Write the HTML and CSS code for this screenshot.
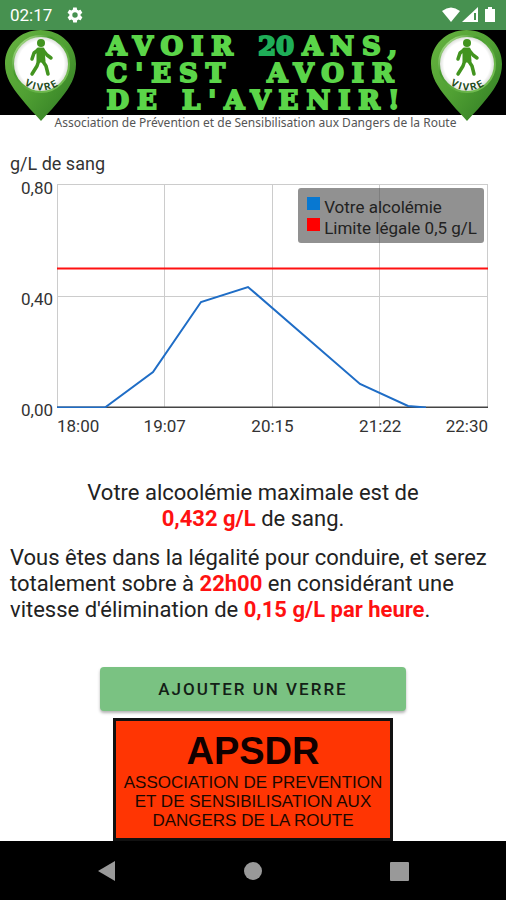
FILE: index.html
```html
<!DOCTYPE html>
<html lang="fr">
<head>
<meta charset="utf-8">
<meta name="viewport" content="width=device-width, initial-scale=1">
<title>Alcoolémie</title>
<link rel="stylesheet" href="styles.css">
</head>
<body>
<div class="status-bar">
  <span>02:17</span>
  <svg class="gear" viewBox="0 0 24 24" width="18" height="18" aria-hidden="true"><path fill="#fff" d="M19.4 13c0-.3.1-.6.1-1s0-.7-.1-1l2.1-1.6c.2-.2.3-.4.1-.7l-2-3.400c-.1-.2-.4-.3-.6-.2l-2.500 1c-.5-.4-1.100-.7-1.700-1l-.4-2.600c0-.3-.2-.5-.5-.5h-4c-.3 0-.5.2-.5.5L9 5.100c-.6.3-1.200.6-1.700 1l-2.500-1c-.2-.1-.5 0-.6.2l-2 3.400c-.1.300 0 .5.100.7L4.500 11c0 .3-.1.600-.1 1s0 .7.100 1l-2.100 1.600c-.2.200-.3.400-.1.700l2 3.400c.1.200.4.300.6.200l2.500-1c.5.4 1.100.7 1.700 1l.4 2.600c0 .3.2.5.5.5h4c.3 0 .5-.2.5-.5l.4-2.600c.6-.3 1.200-.6 1.700-1l2.500 1c.2.1.5 0 .6-.2l2-3.400c.1-.3.1-.5-.1-.7zM12 15.600a3.600 3.600 0 1 1 0-7.200 3.600 3.600 0 0 1 0 7.200z"/></svg>
  <svg class="signals" viewBox="0 0 56 18" width="56" height="18" aria-hidden="true">
    <path fill="#fff" d="M0 5Q9-2 18 5L9 16z"/>
    <path fill="#fff" d="M36 1v15H20z"/><path stroke="#479150" stroke-width="2" d="M33 7v7"/>
    <path fill="#fff" d="M46 1h4v2h3v13h-10V3h3z"/>
  </svg>
</div>

<header class="banner">
  <svg class="pin" viewBox="0 0 71 91" width="71" height="91" role="img" aria-label="Vivre">
    <defs>
      <linearGradient id="pin-body" x1="0" y1="0" x2="1" y2="1"><stop offset="0" stop-color="#67b340"/><stop offset=".5" stop-color="#50a033"/><stop offset="1" stop-color="#2d7822"/></linearGradient>
      <linearGradient id="pin-ring" x1="0" y1="0" x2="1" y2="1"><stop offset="0" stop-color="#d4f5b5"/><stop offset=".35" stop-color="#459a2b"/><stop offset="1" stop-color="#84c960"/></linearGradient>
      <radialGradient id="pin-face"><stop offset=".82" stop-color="#fff"/><stop offset="1" stop-color="#d5d9d3"/></radialGradient>
      <path id="pin-arc" d="M9 39A29 29 0 0 0 65 39"/>
      <g id="pin-shape">
        <path fill="url(#pin-body)" d="M35.500 0C15 0 0 15 0 34c0 13 7 23 15 33 6 8 13 15 21 24 8-9 15-16 21-24 8-10 14-20 14-33C71 15 56 0 35.500 0z"/>
        <circle cx="36" cy="34" r="28" fill="url(#pin-face)" stroke="url(#pin-ring)" stroke-width="2"/>
        <circle cx="36" cy="13" r="4" fill="#42941f"/>
        <path fill="none" stroke="#42941f" stroke-width="3.500" stroke-linecap="round" stroke-linejoin="round" d="M33 20l-4 3-2 6M38 20l4 5 4 3M34 30l-2 6-5 8M37 30l4 6 2 8"/>
        <path fill="#42941f" stroke="#42941f" stroke-width="3" stroke-linejoin="round" d="M33 19h5l1 12h-6z"/>
      </g>
    </defs>
    <use href="#pin-shape"/>
    <text class="pin-text"><textPath href="#pin-arc" startOffset="50%" text-anchor="middle">VIVRE</textPath></text>
  </svg>
  <h1 class="slogan">AVOIR <span class="twenty">20</span>ANS,<br>C'EST&nbsp; AVOIR<br>DE L'AVENIR!</h1>
  <svg class="pin" viewBox="0 0 71 91" width="71" height="91" role="img" aria-label="Vivre">
    <use href="#pin-shape"/>
    <text class="pin-text"><textPath href="#pin-arc" startOffset="50%" text-anchor="middle">VIVRE</textPath></text>
  </svg>
</header>
<p class="tagline">Association de Prévention et de Sensibilisation aux Dangers de la Route</p>

<main>
  <section class="chart">
    <h2 class="unit">g/L de sang</h2>
    <div class="y-axis"><span>0,80</span><span>0,40</span><span>0,00</span></div>
    <div class="plot">
      <svg class="lines" viewBox="0 0 431 224" preserveAspectRatio="none" aria-hidden="true">
        <path class="grid" d="M0 .5H431M0 112.500H431M.5 0V224M107.500 0V224M215.500 0V224M322.500 0V224M430.500 0V224"/>
        <path class="axis" d="M0 223.500H431"/>
        <path class="level" d="M0 223.500H48L96 188L144 118L191 103L303 200L351 222L369 223.500"/>
        <path class="limit" d="M0 84.500H431"/>
      </svg>
      <ul class="legend">
        <li><i class="swatch blue"></i>Votre alcolémie</li>
        <li><i class="swatch red"></i>Limite légale 0,5 g/L</li>
      </ul>
    </div>
    <div class="x-axis"><span>18:00</span><span>19:07</span><span>20:15</span><span>21:22</span><span>22:30</span></div>
  </section>

  <p class="maximum">Votre alcoolémie maximale est de<br><strong>0,432 g/L</strong> de sang.</p>
  <p class="advice">Vous êtes dans la légalité pour conduire, et serez totalement sobre à <strong>22h00</strong> en considérant une vitesse d'élimination de <strong>0,15 g/L par heure</strong>.</p>

  <button class="add" type="button">AJOUTER UN VERRE</button>
  <div class="sponsor">
    <strong class="sponsor-name">APSDR</strong>
    <span>ASSOCIATION DE PREVENTION<br>ET DE SENSIBILISATION AUX<br>DANGERS DE LA ROUTE</span>
  </div>
</main>

<nav class="nav-bar">
  <button type="button" aria-label="Retour"><svg viewBox="0 0 20 20" width="20" height="20"><path d="M18 0v20L1 10z"/></svg></button>
  <button type="button" aria-label="Accueil"><svg viewBox="0 0 20 20" width="20" height="20"><circle cx="10" cy="10" r="9"/></svg></button>
  <button type="button" aria-label="Applications récentes"><svg viewBox="0 0 20 20" width="20" height="20"><rect x="1" y="1" width="19" height="19" rx="1"/></svg></button>
</nav>
</body>
</html>
```
FILE: styles.css
```css
* { box-sizing: border-box; }

body {
  margin: 0;
  min-height: 100vh;
  display: flex;
  flex-direction: column;
  background: #fff;
  color: #222;
  font-family: Roboto, "Liberation Sans", sans-serif;
}

h1, h2, p, ul { margin: 0; padding: 0; font-weight: 400; }

.status-bar {
  display: flex;
  align-items: center;
  height: 30px;
  padding: 0 8px 0 10px;
  background: #479150;
  color: #fff;
  font-size: 17px;
}
.gear { margin-left: 14px; }
.signals { margin-left: auto; }

.banner {
  display: flex;
  justify-content: space-between;
  height: 85px;
  padding: 0 4px 0 5px;
  background: #000;
}
.pin { flex: none; overflow: visible; }
.pin-text { font: bold 10px Roboto, sans-serif; letter-spacing: 2px; fill: #234b1c; }
.slogan {
  width: 294px;
  padding-top: 3px;
  color: #5bd549;
  font: bold 26px/27px "DejaVu Serif", serif;
  letter-spacing: 8px;
  white-space: nowrap;
  -webkit-text-stroke: 2px #5bd549;
}
.twenty { margin-right: 8px; color: #1fae58; -webkit-text-stroke-color: #1fae58; letter-spacing: 0; }

.tagline {
  padding-left: 5px;
  color: #555;
  font: 12px/16px "Noto Sans", sans-serif;
  text-align: center;
}

main {
  display: flex;
  flex-direction: column;
  align-items: center;
  padding: 22px 10px 0;
}

.chart {
  width: 100%;
  display: grid;
  grid-template-columns: 43px 1fr;
  column-gap: 4px;
  padding-right: 8px;
  color: #333;
  font-size: 17px;
  line-height: 20px;
}
.unit { grid-column: 1 / -1; font-size: 18px; line-height: 22px; margin-bottom: 9px; }
.y-axis {
  display: flex;
  flex-direction: column;
  justify-content: space-between;
  text-align: right;
  margin: -6px 0 -12px;
}
.plot { position: relative; height: 224px; }
.lines { display: block; width: 100%; height: 100%; }
.lines path { fill: none; vector-effect: non-scaling-stroke; }
.grid { stroke: #ccc; stroke-width: 1; }
.axis { stroke: #444; stroke-width: 2; }
.level { stroke: #1f6dc6; stroke-width: 2; }
.limit { stroke: #f11; stroke-width: 2; }

.legend {
  position: absolute;
  top: 4px;
  right: 4px;
  padding: 9px 7px 4px 9px;
  border-radius: 3px;
  background: rgba(80, 80, 80, .63);
  color: #222;
  list-style: none;
  line-height: 21px;
}
.legend li { display: flex; gap: 4px; }
.swatch { width: 13px; height: 13px; }
.blue { background: #0878d1; }
.red { background: #f00; }

.x-axis {
  grid-column: 2;
  display: grid;
  grid-template-columns: repeat(8, 1fr);
  margin-top: 8px;
  text-align: center;
}
.x-axis span { grid-column: span 2; }
.x-axis span:first-child { grid-column: span 1; text-align: left; }
.x-axis span:last-child { grid-column: span 1; text-align: right; }

.maximum, .advice { font-size: 22px; line-height: 26px; }
.maximum { margin-top: 44px; text-align: center; }
.advice { width: 100%; margin-top: 13px; }
.maximum strong, .advice strong { color: #f11; font-weight: 700; }

.add {
  width: 63%;
  height: 44px;
  margin-top: 44px;
  border: 0;
  border-radius: 4px;
  background: #7ac282;
  box-shadow: 0 2px 3px rgba(0, 0, 0, .3);
  color: #132016;
  font: 500 17px/20px Roboto, sans-serif;
  letter-spacing: 2px;
}

.sponsor {
  display: flex;
  flex-direction: column;
  margin-top: 7px;
  padding: 11px 8px 8px;
  border: 3px solid #111;
  background: #ff3503;
  color: #1c0800;
  font: 17px/19px "Liberation Sans", Arial, sans-serif;
  text-align: center;
}
.sponsor-name { font-size: 38px; line-height: 38px; margin-bottom: 3px; color: #100; }

.nav-bar {
  flex: 1;
  min-height: 58px;
  display: flex;
  justify-content: center;
  align-items: center;
  gap: 126px;
  background: #000;
}
.nav-bar button { display: flex; padding: 0; border: 0; background: none; }
.nav-bar svg { fill: #999; }
```
